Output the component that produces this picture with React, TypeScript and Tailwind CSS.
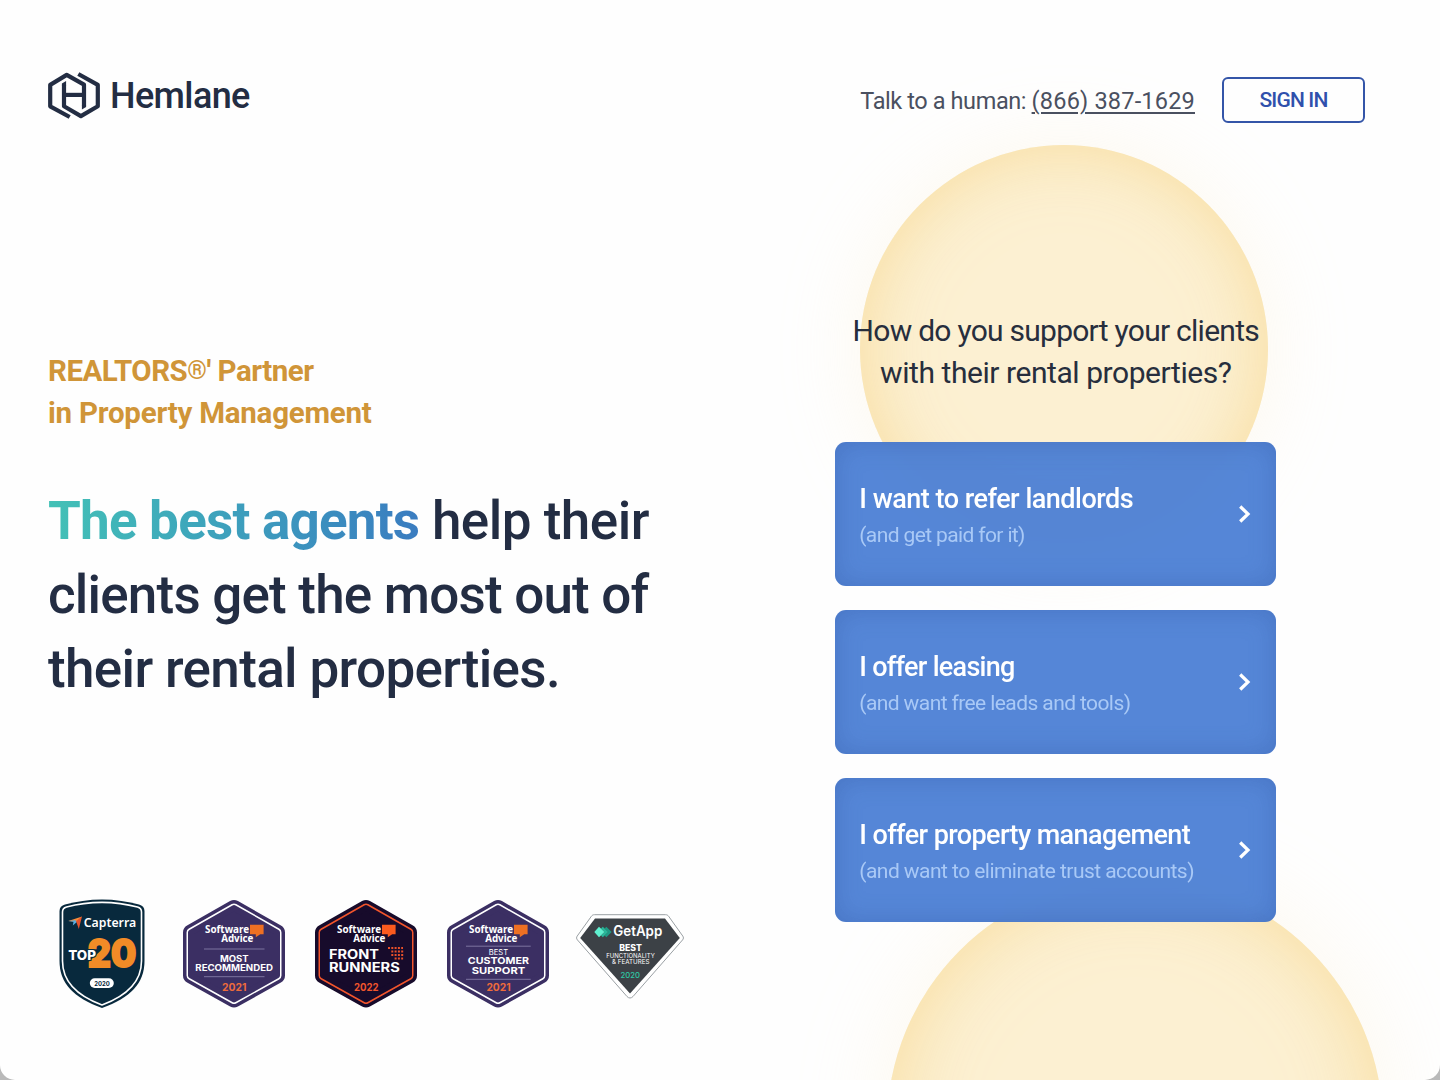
import type { ReactNode } from 'react';

const HEX = '66,18 109,42.5 109,85.5 66,109.5 23,85.5 23,42.5';

type LabelProps = {
  x: number;
  y: number;
  w: number;
  size: number;
  weight?: number;
  fill?: string;
  className?: string;
  children: string;
};

function Label({ x, y, w, size, weight = 700, fill = '#ffffff', className = '', children }: LabelProps) {
  return (
    <text className={className} x={x} y={y} textLength={w} lengthAdjust="spacingAndGlyphs" fontSize={size} fontWeight={weight} fill={fill}>
      {children}
    </text>
  );
}

function Badge({ label, children }: { label: string; children: ReactNode }) {
  return (
    <svg className="h-[130px] w-[132px] shrink-0 font-['Inter',sans-serif]" viewBox="0 0 132 130" role="img" aria-label={label}>
      {children}
    </svg>
  );
}

function Hexagon({ fill, ring }: { fill: string; ring: string }) {
  return (
    <g strokeLinejoin="round">
      <polygon points={HEX} fill={fill} stroke={fill} strokeWidth="16" />
      <polygon points={HEX} fill={ring} stroke={ring} strokeWidth="9" />
      <polygon points={HEX} fill={fill} stroke={fill} strokeWidth="6" />
    </g>
  );
}

function SoftwareAdvice({ bubble }: { bubble: string }) {
  return (
    <g className="font-['Noto_Sans',sans-serif]">
      <path d="M82 34.8h13.600v9.400h-3.400l-4.400 3v-3H82z" fill={bubble} />
      <Label x={37} y={42.500} w={44} size={10.600}>Software</Label>
      <Label x={53.200} y={52} w={32.200} size={10.600}>Advice</Label>
    </g>
  );
}

function CapterraBadge() {
  return (
    <Badge label="Capterra Top 20 2020">
      <path d="M66 9.500c13 0 26 2 37 5 3.500 1 5.500 3 5.500 6.500V71c0 22-14 37-42.500 47C37.500 108 23.500 93 23.500 71V21c0-3.500 2-5.500 5.500-6.500 11-3 24-5 37-5z" fill="#08293d" />
      <path d="M66 12.400c12.500 0 25 1.800 35.500 4.700 2.700.8 4 2.300 4 4.900V71c0 20-12.500 34-39.500 44C39 105 26.500 91 26.500 71V22c0-2.600 1.300-4.100 4-4.900C41 14.200 53.500 12.400 66 12.400z" fill="#08293d" stroke="#ffffff" strokeWidth="1.600" />
      <path d="M32.300 31 46 26.400 41 32z" fill="#f58b3c" />
      <path d="M32.300 31 39 30.300 41.500 31.500 36.800 35.500 37.500 31.800z" fill="#58aee0" />
      <path d="M46 26.400 42.800 39 40.900 33.500 40 31.200z" fill="#e5532d" />
      <Label className="font-['Noto_Sans',sans-serif]" x={47.800} y={36.500} w={52.400} size={13} weight={600}>Capterra</Label>
      <text x={51.800} y={77.300} textLength={48.500} lengthAdjust="spacingAndGlyphs" fontSize={38.500} fontWeight={800} fill="#f18b27" stroke="#f18b27" strokeWidth="2.200">20</text>
      <text x={32.200} y={69.600} textLength={27.800} lengthAdjust="spacingAndGlyphs" fontSize={13.600} fontWeight={800} fill="#ffffff" stroke="#08293d" strokeWidth="2" paintOrder="stroke">TOP</text>
      <rect x={53.800} y={88.200} width={24} height={9.800} rx={4.900} fill="#ffffff" />
      <Label x={58.200} y={95.600} w={15.500} size={6.800} fill="#08293d">2020</Label>
    </Badge>
  );
}

function MostRecommendedBadge() {
  return (
    <Badge label="Software Advice Most Recommended 2021">
      <Hexagon fill="#3b2f63" ring="#ffffff" />
      <SoftwareAdvice bubble="#ee7023" />
      <path d="M36 59h60.500M36 86.700h60.500" stroke="#7d75a0" strokeWidth="1" />
      <Label x={52} y={71.700} w={28.600} size={8.800}>MOST</Label>
      <Label x={27.300} y={80.500} w={77.700} size={8.800}>RECOMMENDED</Label>
      <Label x={54} y={101} w={24.400} size={10} fill="#ee6b3b">2021</Label>
    </Badge>
  );
}

function FrontRunnersBadge() {
  return (
    <Badge label="Software Advice Front Runners 2022">
      <Hexagon fill="#170b2b" ring="#f2552c" />
      <SoftwareAdvice bubble="#fb5a1e" />
      <path d="M88 58h15M91.300 61.500h12M91.300 65h12M94.600 68.500h8.500" stroke="#e8502a" strokeWidth="2" strokeDasharray="2 1.300" />
      <Label x={29} y={69.300} w={50} size={12.600}>FRONT</Label>
      <Label x={29} y={82.300} w={70.800} size={12.600}>RUNNERS</Label>
      <Label x={54} y={101} w={24.500} size={10} fill="#f2552c">2022</Label>
    </Badge>
  );
}

function CustomerSupportBadge() {
  return (
    <Badge label="Software Advice Best Customer Support 2021">
      <Hexagon fill="#3b2f63" ring="#ffffff" />
      <SoftwareAdvice bubble="#ee7023" />
      <path d="M34 56.200h64.700M34 89.300h64.700" stroke="#7d75a0" strokeWidth="1" />
      <Label x={56.800} y={64.600} w={19.400} size={7.600} weight={400}>BEST</Label>
      <Label x={35.800} y={74.200} w={61.200} size={9.400}>CUSTOMER</Label>
      <Label x={39.800} y={83.800} w={53.400} size={9.400}>SUPPORT</Label>
      <Label x={54.400} y={101} w={24.200} size={10} fill="#ee6b3b">2021</Label>
    </Badge>
  );
}

function GetAppBadge() {
  return (
    <Badge label="GetApp Best Functionality and Features 2020">
      <path d="M30.500 24.700h71c1.500 0 2.300.5 3 1.400l14.300 20c.9 1.300.8 2.500-.2 3.800L69 106.500c-1.900 2-4.100 2-6 0L13.400 49.900c-1-1.300-1.100-2.500-.2-3.800l14.300-20c.7-.9 1.500-1.400 3-1.400z" fill="#ffffff" stroke="#9aa0a4" strokeWidth="1" />
      <path d="M31 28.500h70L115.800 48 66 103.500 16.200 48z" fill="#3c4146" />
      <path d="m42.300 36.800 5.400 5.200-5.400 5.200-1.600-1.600 3.600-3.600-3.600-3.600z" fill="#1e9a84" />
      <path d="m38.800 36.800 5.400 5.200-5.400 5.200-1.800-1.800 3.500-3.400-3.500-3.400z" fill="#27b89a" />
      <path d="M35 36.800 40.500 42 35 47.200 30.300 42z" fill="#5ff0cf" />
      <Label x={49.300} y={46} w={49} size={14} weight={600}>GetApp</Label>
      <Label x={55.300} y={61.300} w={22.700} size={8.400} weight={800}>BEST</Label>
      <Label x={42.300} y={68} w={48.400} size={6.600} weight={400}>FUNCTIONALITY</Label>
      <Label x={48} y={74.400} w={37.400} size={6.600} weight={400}>&amp; FEATURES</Label>
      <Label x={56.600} y={87.500} w={19.400} size={7.800} weight={500} fill="#2ec9a6">2020</Label>
    </Badge>
  );
}

function LogoMark() {
  return (
    <svg className="h-[47px] w-[52px]" viewBox="0 0 52 47" fill="none" stroke="#232d43" strokeWidth="4.200" strokeLinejoin="round" aria-hidden="true">
      <path d="M21.700 45 2.200 34.300V12.900L18.700 2.900 36 12.700V34" />
      <path d="M30.300 2 49.800 12.900v21.400L32.900 44.100 16 34.300V13" />
      <path d="M16 22.900h20" />
      <path d="M33.900 33.500h4.200v1.500l-4.200 2.500zM13.900 13.500h4.200V9l-4.200 2.500z" fill="#232d43" stroke="none" />
    </svg>
  );
}

type Option = { title: string; note: string; titleClass: string; noteClass: string };

const options: Option[] = [
  { title: 'I want to refer landlords', note: '(and get paid for it)', titleClass: 'tracking-[-0.5px]', noteClass: 'tracking-[-0.62px]' },
  { title: 'I offer leasing', note: '(and want free leads and tools)', titleClass: 'tracking-[-0.72px]', noteClass: 'tracking-[-0.59px]' },
  { title: 'I offer property management', note: '(and want to eliminate trust accounts)', titleClass: 'tracking-[-0.6px]', noteClass: 'tracking-[-0.54px]' },
];

function OptionCard({ title, note, titleClass, noteClass }: Option) {
  return (
    <button className="flex h-[144px] w-full items-center justify-between rounded-[11px] bg-[#4a7ed5]/94 pr-[25.500px] pl-6 text-left shadow-[inset_0_0_26px_rgba(55,95,170,0.45)] backdrop-blur-[20px]">
      <span className="flex flex-col pt-[6px] whitespace-nowrap">
        <span className={`text-[27px] leading-[36px] font-medium text-white ${titleClass}`}>{title}</span>
        <span className={`text-[21px] leading-[36px] text-[#a9c9f6] ${noteClass}`}>{note}</span>
      </span>
      <svg className="h-[18px] w-[13px]" viewBox="0 0 13 18" fill="none" stroke="#ffffff" strokeWidth="3.200" aria-hidden="true">
        <path d="m2.200 1.500 7.800 7.500-7.800 7.500" />
      </svg>
    </button>
  );
}

export default function App() {
  return (
    <div className="relative h-[1080px] w-[1440px] overflow-hidden bg-[#b9b9b9] font-['Roboto',sans-serif]">
      <div className="relative h-full overflow-hidden rounded-b-[15px] bg-[#fefefe]">
        <div className="absolute top-[144.500px] left-[860px] size-[408px] rounded-full bg-[#fcf0d2] shadow-[inset_0_0_70px_rgba(247,214,140,0.75),0_0_80px_rgba(250,232,195,0.28)]" />
        <div className="absolute top-[878px] left-[887px] size-[496px] rounded-full bg-[#fcf0d2] shadow-[inset_0_0_80px_rgba(247,214,140,0.75),0_0_90px_rgba(250,232,195,0.28)]" />

        <div className="relative flex h-full flex-col">
          <header className="flex h-[124px] items-start justify-between pr-[75px] pl-12">
            <div className="flex items-start pt-[72px]">
              <LogoMark />
              <span className="ml-[10px] pt-px text-[36px] leading-[47px] font-medium tracking-[-0.62px] text-[#232d43]">Hemlane</span>
            </div>
            <div className="flex items-start pt-[77px]">
              <p className="pt-px text-[23.500px] leading-[46px] whitespace-nowrap text-[#4a5060]">
                <span className="tracking-[-0.4px]">Talk to a human: </span>
                <a className="tracking-[0.2px] underline decoration-2 underline-offset-[3px]">(866) 387-1629</a>
              </p>
              <button className="ml-[27px] h-[46px] w-[143px] rounded-[6px] border-2 border-[#3455a8] pt-[2px] text-[21px] font-medium tracking-[-0.85px] text-[#2f50ac]">
                SIGN IN
              </button>
            </div>
          </header>

          <main className="flex flex-1">
            <section className="flex w-[788px] flex-col pt-[226px]">
              <h2 className="pl-12 text-[29.500px] leading-[42px] font-bold text-[#d09538]">
                <span className="block tracking-[-0.5px]">
                  REALTORS<span className="align-[2px] text-[25px] leading-none">®</span>' Partner
                </span>
                <span className="block tracking-[-0.230px]">in Property Management</span>
              </h2>
              <h1 className="mt-[50px] pl-12 text-[53px] leading-[74px] font-medium whitespace-nowrap text-[#232d43]">
                <span className="block">
                  <span className="bg-linear-to-r from-[#43c1b6] to-[#3a7cc0] bg-clip-text font-bold tracking-[-0.8px] text-transparent">The best agents</span>
                  <span className="tracking-[-0.5px]"> help their</span>
                </span>
                <span className="block tracking-[-0.8px]">clients get the most out of</span>
                <span className="block tracking-[-0.651px]">their rental properties.</span>
              </h1>
              <div className="mt-auto mb-[60px] ml-9 flex">
                <CapterraBadge />
                <MostRecommendedBadge />
                <FrontRunnersBadge />
                <CustomerSupportBadge />
                <GetAppBadge />
              </div>
            </section>

            <section className="ml-[47.300px] w-[441px] pt-[186px]">
              <h3 className="text-center text-[30px] leading-[42px] whitespace-nowrap text-[#272e3d]">
                <span className="block tracking-[-0.74px]">How do you support your clients</span>
                <span className="block tracking-[-0.44px]">with their rental properties?</span>
              </h3>
              <div className="mt-12 flex flex-col gap-6">
                {options.map((option) => (
                  <OptionCard key={option.title} {...option} />
                ))}
              </div>
            </section>
          </main>
        </div>
      </div>
    </div>
  );
}
